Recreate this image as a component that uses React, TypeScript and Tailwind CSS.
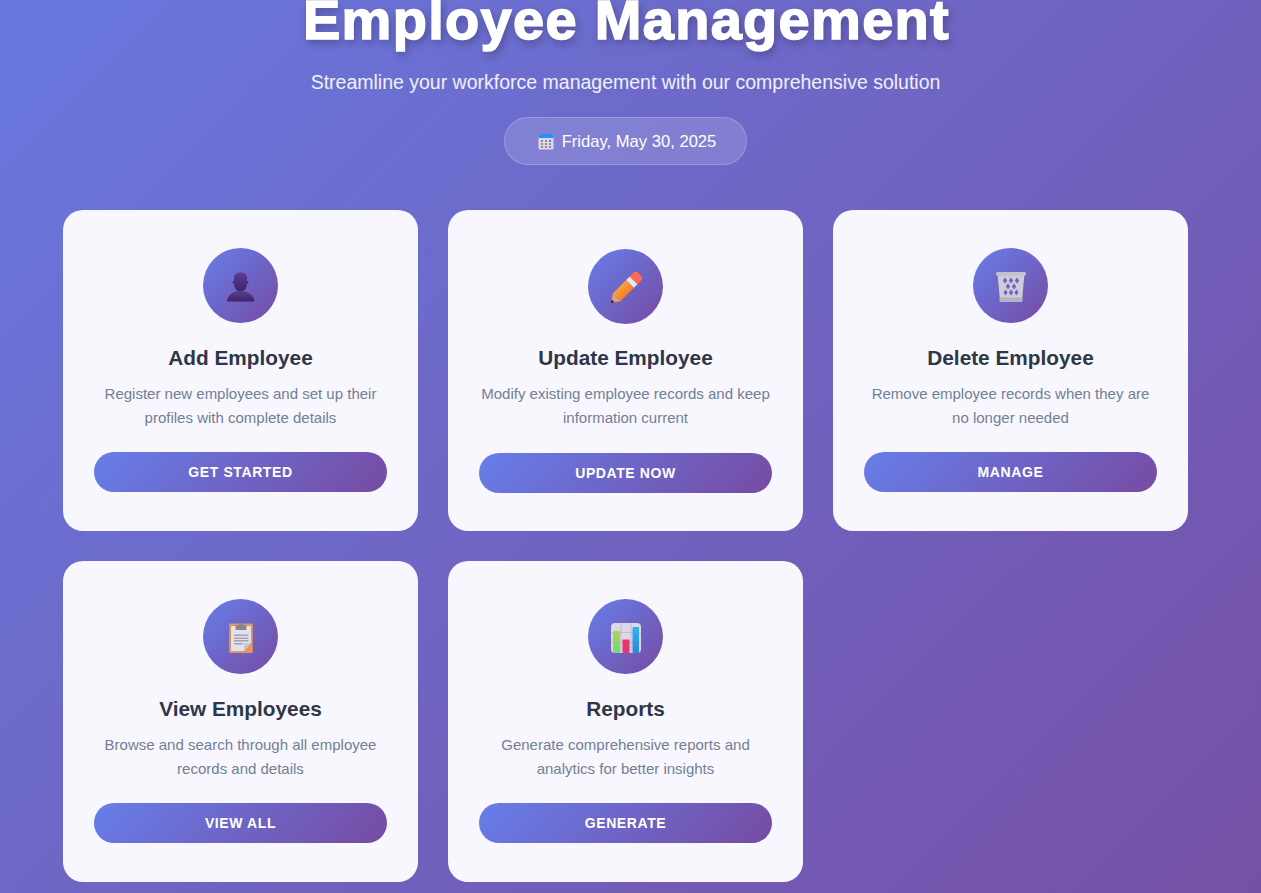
const sans = "font-['Liberation_Sans',Arial,sans-serif]";

function PersonIcon() {
  return (
    <svg width="30" height="30" viewBox="0 0 30 30">
      <defs>
        <linearGradient id="person" x1="0" y1="0" x2="0" y2="1">
          <stop offset="0" stopColor="#5a3d96" />
          <stop offset="1" stopColor="#3d2468" />
        </linearGradient>
      </defs>
      <circle cx="7.800" cy="10.500" r="1.300" fill="#3f2870" />
      <circle cx="21.200" cy="10.500" r="1.300" fill="#3f2870" />
      <path d="M8 5.500C8 2 10.500.5 14.500.5S21 2 21 5.500v7c0 3.500-2.800 7-6.500 7S8 16 8 12.500z" fill="url(#person)" />
      <path d="M1 29.500C1.500 23.500 6.500 19 14.500 19S28 23.500 28.500 29.500z" fill="url(#person)" />
    </svg>
  );
}

function PencilIcon() {
  return (
    <svg width="32" height="32" viewBox="0 0 32 32">
      <defs>
        <linearGradient id="pencilBody" x1="0" y1="0" x2="0" y2="1">
          <stop offset="0" stopColor="#ffa03a" />
          <stop offset="1" stopColor="#f37d2e" />
        </linearGradient>
      </defs>
      <g transform="translate(1 31) rotate(-45)">
        <path d="M0 0l8-5.500v11z" fill="#d9a27c" />
        <path d="M0 0l3-2v4z" fill="#2c1238" />
        <rect x="8" y="-5.500" width="19" height="11" fill="url(#pencilBody)" />
        <rect x="27" y="-5.500" width="5" height="11" fill="#e9e4ef" />
        <path d="M32-5.500h6c1.500 0 2.500 1 2.500 2.500v6c0 1.500-1 2.500-2.500 2.500h-6z" fill="#ff6a4d" />
      </g>
    </svg>
  );
}

function TrashIcon() {
  return (
    <svg width="32" height="32" viewBox="0 0 32 32">
      <path d="M2.500 3h27l-2.500 26.500c-.1 1-.8 1.500-1.800 1.500H6.800c-1 0-1.700-.5-1.800-1.500z" fill="#cfccd8" />
      <g fill="#6c63c2">
        <path d="M10 6.500l2.200 3-2.200 3-2.200-3z" />
        <path d="M16 6.500l2.200 3-2.200 3-2.200-3z" />
        <path d="M22 6.500l2.200 3-2.200 3-2.200-3z" />
        <path d="M13 12.500l2.200 3-2.200 3-2.200-3z" />
        <path d="M19 12.500l2.200 3-2.200 3-2.200-3z" />
        <path d="M10.500 18.500l2 3-2 3-2-3z" />
        <path d="M16 18.500l2.200 3-2.200 3-2.200-3z" />
        <path d="M21.500 18.500l2 3-2 3-2-3z" />
      </g>
      <rect x="1" y="1" width="30" height="3.500" rx="1.500" fill="#c4c0ce" />
      <rect x="4.500" y="26.500" width="23" height="4.500" rx="1.500" fill="#b5b1c0" />
    </svg>
  );
}

function ClipboardIcon() {
  return (
    <svg width="32" height="32" viewBox="0 0 32 32">
      <rect x="4.250" y="1.500" width="23.500" height="29.500" rx="1" fill="#e2985a" />
      <path d="M6 4h20v17l-7 8H6z" fill="#e4e0ee" />
      <path d="M26 21l-7 8v-7c0-.6.4-1 1-1z" fill="#c8c3d4" />
      <rect x="9" y="12.500" width="14.500" height="1.500" fill="#a5a1b2" />
      <rect x="9" y="15.500" width="14.500" height="1.500" fill="#a5a1b2" />
      <rect x="9" y="18" width="14.500" height="1.500" fill="#a5a1b2" />
      <rect x="9" y="21" width="9" height="1.500" fill="#a5a1b2" />
      <rect x="10.500" y="3" width="11" height="5" rx="1" fill="#8a8593" />
      <circle cx="16" cy="2.800" r="1.800" fill="#8a8593" />
    </svg>
  );
}

function ChartIcon() {
  return (
    <svg width="32" height="32" viewBox="0 0 32 32">
      <defs>
        <linearGradient id="barGreen" x1="0" y1="0" x2="0" y2="1">
          <stop offset="0" stopColor="#a8d84e" />
          <stop offset="1" stopColor="#6fdc7a" />
        </linearGradient>
        <linearGradient id="barBlue" x1="0" y1="0" x2="0" y2="1">
          <stop offset="0" stopColor="#2cb5f0" />
          <stop offset="1" stopColor="#2d86d8" />
        </linearGradient>
      </defs>
      <rect x="1" y="1" width="30" height="30" rx="4" fill="#dcd8e6" />
      <path d="M1 10.500h30M1 20.500h30M11 1v30M21 1v30" stroke="#b9b5c6" strokeWidth="0.8" />
      <rect x="3" y="9" width="7" height="22" rx="1" fill="url(#barGreen)" />
      <rect x="12.500" y="17.500" width="7" height="13.500" rx="1" fill="#e8346f" />
      <rect x="22.500" y="5" width="6.500" height="26" rx="1" fill="url(#barBlue)" />
    </svg>
  );
}

function CalendarIcon() {
  return (
    <svg width="16" height="17" viewBox="0 0 16 17" className="mr-2 -mt-[2px]">
      <rect x="0.500" y="1" width="15" height="15.500" rx="1.500" fill="#dfd6ea" />
      <path d="M.5 5V2.500C.5 1.500 1 1 2 1h12c1 0 1.500.5 1.500 1.500V5z" fill="#2f8ff6" />
      <g fill="#8f88a6">
        <rect x="3" y="7" width="2" height="2" />
        <rect x="7" y="7" width="2" height="2" />
        <rect x="11" y="7" width="2" height="2" fill="#2f8ff6" />
        <rect x="3" y="10" width="2" height="2" />
        <rect x="7" y="10" width="2" height="2" />
        <rect x="11" y="10" width="2" height="2" />
        <rect x="3" y="13" width="2" height="2" />
        <rect x="7" y="13" width="2" height="2" />
        <rect x="11" y="13" width="2" height="2" />
      </g>
    </svg>
  );
}

const cards = [
  { title: "Add Employee", desc: ["Register new employees and set up their", "profiles with complete details"], cta: "Get Started", icon: <PersonIcon />, shift: "" },
  { title: "Update Employee", desc: ["Modify existing employee records and keep", "information current"], cta: "Update Now", icon: <PencilIcon />, shift: "translate-y-px" },
  { title: "Delete Employee", desc: ["Remove employee records when they are", "no longer needed"], cta: "Manage", icon: <TrashIcon />, shift: "" },
  { title: "View Employees", desc: ["Browse and search through all employee", "records and details"], cta: "View All", icon: <ClipboardIcon />, shift: "" },
  { title: "Reports", desc: ["Generate comprehensive reports and", "analytics for better insights"], cta: "Generate", icon: <ChartIcon />, shift: "" },
];

export default function App() {
  return (
    <div className={`h-[893px] overflow-hidden bg-[linear-gradient(135deg,#6878de_0%,#7650a6_100%)] pr-[10px] ${sans}`}>
      <header className="-mt-[12px] flex flex-col items-center text-white">
        <h1 className="ml-[2px] text-[56px] leading-[64px] font-bold tracking-[1.3px] [-webkit-text-stroke:1.5px_white] [text-shadow:2px_4px_8px_rgba(0,0,0,0.3)]">Employee Management</h1>
        <p className="mt-[19px] text-[19.5px] leading-[23px] text-white/90">Streamline your workforce management with our comprehensive solution</p>
        <div className="mt-[23px] flex h-[48px] w-[243px] items-center justify-center rounded-full border border-white/20 bg-white/15 pt-[2px] pl-[3px] text-[16.6px]">
          <CalendarIcon />
          Friday, May 30, 2025
        </div>
      </header>

      <main className="mx-auto mt-[45px] grid w-[1125px] grid-cols-3 gap-[30px]">
        {cards.map((card) => (
          <section key={card.title} className="flex h-[321px] flex-col items-center rounded-[20px] bg-[#f8f7fd] px-[31px] pt-[38px] text-center">
            <div className={`flex h-[75px] w-[75px] items-center justify-center rounded-full bg-[linear-gradient(135deg,#667eea,#764ba2)] pt-[3px] ${card.shift}`}>
              {card.icon}
            </div>
            <h2 className="mt-[23px] text-[20.8px] leading-[24px] font-bold text-[#2d3748]">{card.title}</h2>
            <p className="mt-[12px] text-[15px] leading-[24px] text-[#718096]">
              {card.desc[0]}
              <br />
              {card.desc[1]}
            </p>
            <button type="button" className={`mt-[22px] h-[40px] w-[293px] rounded-full bg-[linear-gradient(135deg,#667eea,#764ba2)] text-[14px] font-bold tracking-[0.6px] text-white uppercase ${card.shift}`}>
              {card.cta}
            </button>
          </section>
        ))}
      </main>
    </div>
  );
}
